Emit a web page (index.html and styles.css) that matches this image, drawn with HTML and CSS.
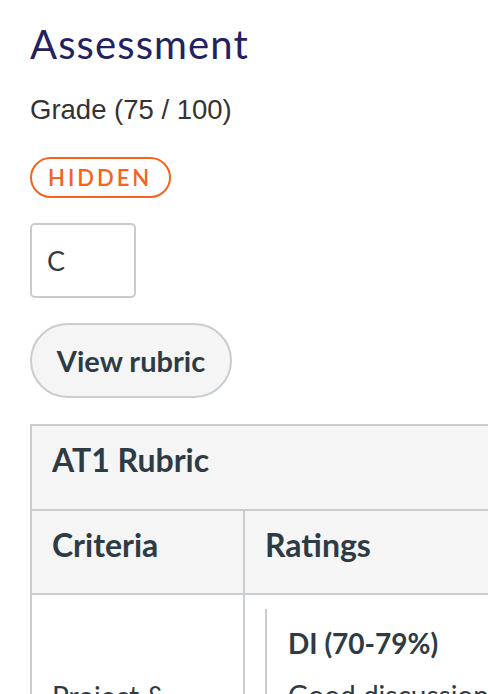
FILE: index.html
```html
<!DOCTYPE html>
<html lang="en">
<head>
<meta charset="utf-8">
<title>Assessment</title>
<link rel="stylesheet" href="styles.css">
</head>
<body>
<main class="page">
  <h2 class="title">Assessment</h2>
  <p class="grade">Grade (75 / 100)</p>
  <div class="pill-row"><span class="pill">HIDDEN</span></div>
  <div class="input-row"><input class="grade-input" type="text" value="C" aria-label="Grade"></div>
  <div class="btn-row"><button class="btn" type="button">View rubric</button></div>
  <table class="rubric">
    <caption class="rubric-caption">AT1 Rubric</caption>
    <thead>
      <tr>
        <th class="col-criteria">Criteria</th>
        <th class="col-ratings">Ratings</th>
      </tr>
    </thead>
    <tbody>
      <tr>
        <td class="criteria-cell">Project &amp; Planning</td>
        <td class="ratings-cell">
          <div class="rating">
            <div class="rating-title">DI (70-79%)</div>
            <div class="rating-desc">Good discussion of the project</div>
          </div>
        </td>
      </tr>
    </tbody>
  </table>
</main>
</body>
</html>
```

FILE: styles.css
```css
html, body {
  margin: 0;
  padding: 0;
  background: #fff;
  overflow: hidden;
}
.page {
  padding: 0 0 0 30px;
  width: 700px;
  font-family: Lato, "Open Sans", sans-serif;
  color: #2d3b45;
}
.title {
  margin: 20px 0 0;
  font-family: Lato, sans-serif;
  font-weight: 400;
  font-size: 40px;
  line-height: 48px;
  letter-spacing: 1.1px;
  color: #24215f;
}
.grade {
  margin: 26px 0 0;
  font-family: "Liberation Sans", Arial, sans-serif;
  font-size: 27.5px;
  line-height: 32px;
  color: #333;
}
.pill-row {
  margin-top: 31px;
  height: 41px;
}
.pill {
  display: inline-block;
  box-sizing: border-box;
  height: 41px;
  padding: 0 17px 0 16px;
  border: 2px solid #f9621c;
  border-radius: 21px;
  font-family: Lato, sans-serif;
  font-weight: 600;
  font-size: 22px;
  line-height: 37px;
  letter-spacing: 3px;
  color: #f9621c;
}
.input-row {
  margin-top: 25px;
  height: 75px;
}
.grade-input {
  box-sizing: border-box;
  width: 106px;
  height: 75px;
  margin: 0;
  padding: 0 15px;
  border: 2px solid #c8cacc;
  border-radius: 5px;
  font-family: Lato, sans-serif;
  font-size: 27px;
  color: #2d3b45;
  background: #fff;
  outline: none;
}
.btn-row {
  margin-top: 25px;
  height: 75px;
}
.btn {
  box-sizing: border-box;
  width: 202px;
  height: 75px;
  margin: 0;
  padding: 0;
  border: 2px solid #c7cdd1;
  border-radius: 38px;
  background: #f5f5f5;
  font-family: Lato, sans-serif;
  font-weight: 700;
  font-size: 29px;
  color: #2d3b45;
}
.rubric {
  margin-top: 26px;
  width: 620px;
  border-collapse: collapse;
  border: 2px solid #c7cdd1;
}
.rubric-caption {
  caption-side: top;
  text-align: left;
  background: #f5f5f5;
  border: 2px solid #c7cdd1;
  border-bottom: none;
  padding: 10px 20px 25px;
  font-weight: 700;
  font-size: 32px;
  line-height: 48px;
}
.rubric th {
  background: #f5f5f5;
  border: 2px solid #c7cdd1;
  text-align: left;
  padding: 10px 20px 24px;
  font-weight: 700;
  font-size: 32px;
  line-height: 48px;
}
.col-criteria {
  width: 171px;
}
.rubric td {
  border: 2px solid #c7cdd1;
  vertical-align: top;
}
.criteria-cell {
  padding: 80px 20px 40px;
  font-size: 28px;
  line-height: 42px;
}
.ratings-cell {
  padding: 14px 0 0 20px;
}
.rating {
  border-left: 2px solid #c7cdd1;
  padding: 13px 0 40px 21px;
}
.rating-title {
  font-weight: 700;
  font-size: 28px;
  line-height: 42px;
}
.rating-desc {
  margin-top: 10px;
  font-size: 28px;
  line-height: 42px;
}
```
